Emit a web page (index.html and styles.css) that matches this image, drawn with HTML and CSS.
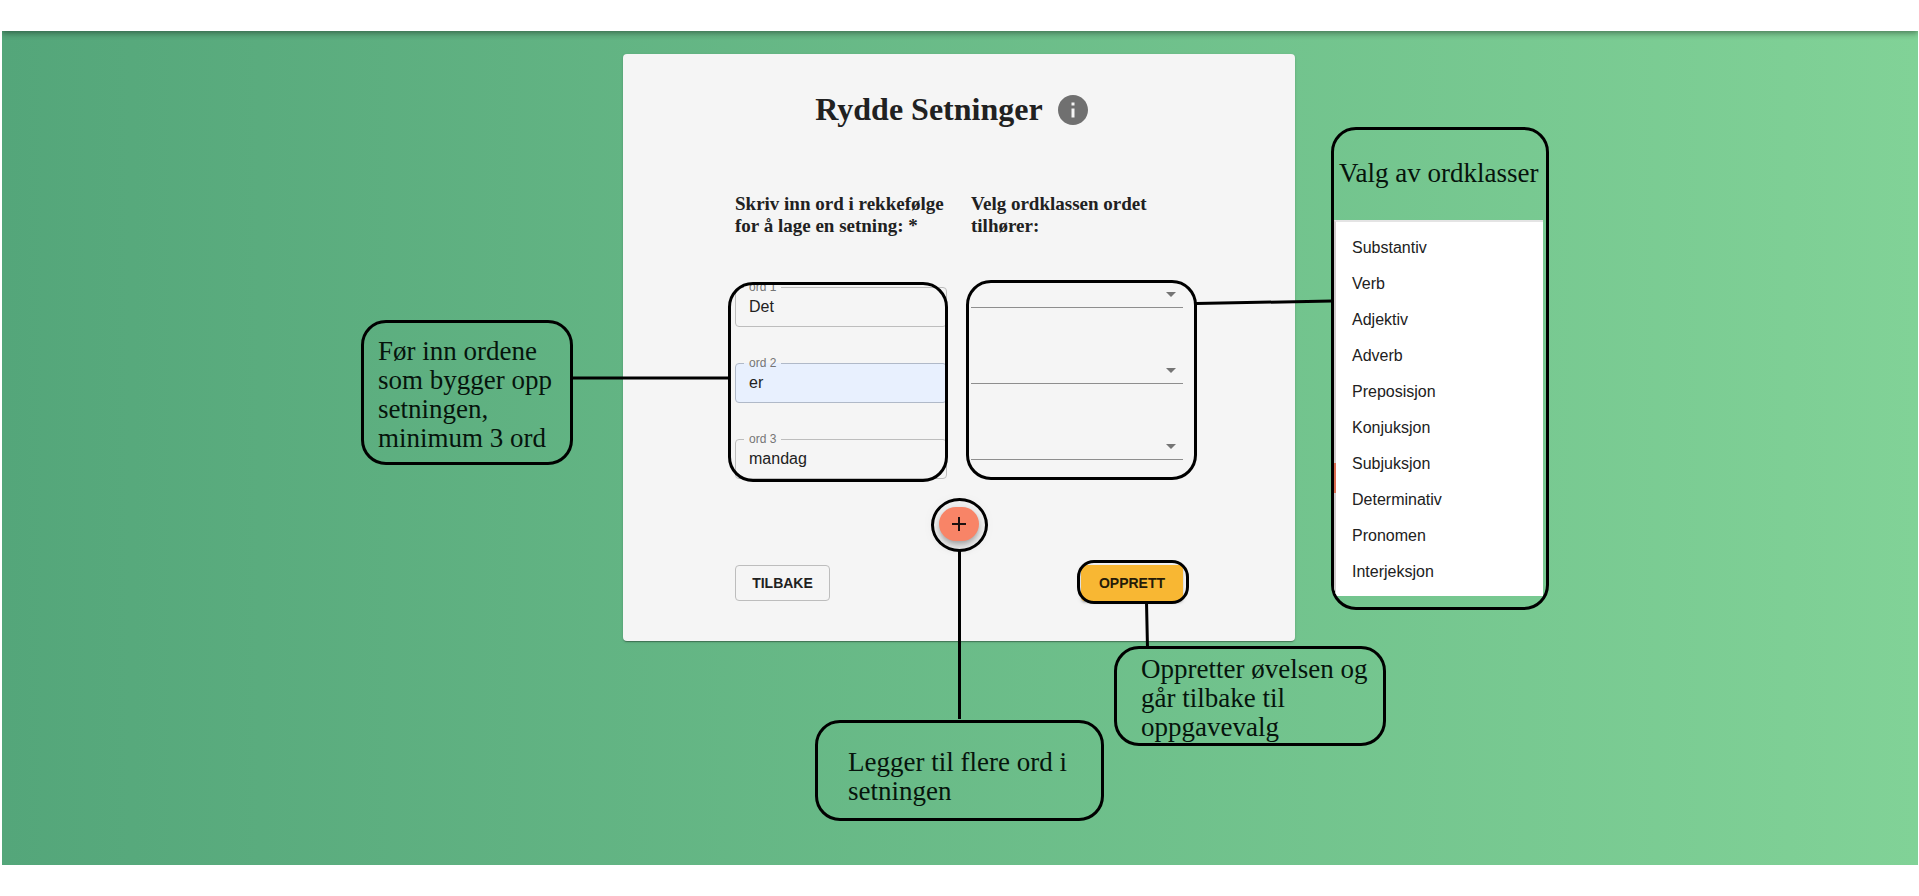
FILE: index.html
```html
<!DOCTYPE html>
<html lang="nb">
<head>
<meta charset="utf-8">
<title>Rydde Setninger</title>
<link rel="stylesheet" href="styles.css">
</head>
<body>
<header class="topbar"></header>
<main class="stage">
  <div class="canvas">
    <form class="card">
      <div class="title-row">
        <h1 class="title">Rydde Setninger</h1>
        <button class="info" type="button" aria-label="Informasjon">
          <svg viewBox="0 0 24 24" width="36" height="36"><path fill="currentColor" d="M12 2C6.48 2 2 6.48 2 12s4.480 10 10 10 10-4.480 10-10S17.520 2 12 2zm1 15h-2v-6h2v6zm0-8h-2V7h2v2z"/></svg>
        </button>
      </div>
      <div class="columns headings">
        <h2 class="heading">Skriv inn ord i rekkefølge for å lage en setning: *</h2>
        <h2 class="heading">Velg ordklassen ordet tilhører:</h2>
      </div>
      <div class="columns words">
        <div class="field">
          <label class="field-label" for="ord1">ord 1</label>
          <input class="field-input" id="ord1" type="text" value="Det">
        </div>
        <div class="choice">
          <select class="choice-select" aria-label="Ordklasse for ord 1"><option></option><option>Substantiv</option><option>Verb</option></select>
        </div>
        <div class="field filled">
          <label class="field-label" for="ord2">ord 2</label>
          <input class="field-input" id="ord2" type="text" value="er">
        </div>
        <div class="choice">
          <select class="choice-select" aria-label="Ordklasse for ord 2"><option></option><option>Substantiv</option><option>Verb</option></select>
        </div>
        <div class="field">
          <label class="field-label" for="ord3">ord 3</label>
          <input class="field-input" id="ord3" type="text" value="mandag">
        </div>
        <div class="choice">
          <select class="choice-select" aria-label="Ordklasse for ord 3"><option></option><option>Substantiv</option><option>Verb</option></select>
        </div>
      </div>
      <button class="fab" type="button" aria-label="Legg til ord">
        <svg viewBox="0 0 24 24" width="24" height="24"><path fill="currentColor" d="M19 13h-6v6h-2v-6H5v-2h6V5h2v6h6v2z"/></svg>
      </button>
      <div class="actions">
        <button class="button outlined" type="button">TILBAKE</button>
        <button class="button contained" type="button">OPPRETT</button>
      </div>
    </form>

    <svg class="connectors" viewBox="0 0 1200 834" width="1200" height="834" aria-hidden="true">
      <path d="M213 347H370M837 272.500L973 270M600.500 520V688M787.500 571L788.500 617"/>
    </svg>
    <div class="callout around-fields"></div>
    <div class="callout around-choices"></div>
    <div class="callout around-fab"></div>
    <div class="callout around-submit"></div>
    <p class="callout note note-words">Før inn ordene<br>som bygger opp<br>setningen,<br>minimum 3 ord</p>
    <p class="callout note note-add">Legger til flere ord i<br>setningen</p>
    <p class="callout note note-submit">Oppretter øvelsen og<br>går tilbake til<br>oppgavevalg</p>
    <section class="callout classes">
      <h2 class="classes-title">Valg av ordklasser</h2>
      <ul class="menu">
        <li>Substantiv</li>
        <li>Verb</li>
        <li>Adjektiv</li>
        <li>Adverb</li>
        <li>Preposisjon</li>
        <li>Konjuksjon</li>
        <li>Subjuksjon</li>
        <li>Determinativ</li>
        <li>Pronomen</li>
        <li>Interjeksjon</li>
      </ul>
    </section>
  </div>
</main>
<footer class="bottombar"></footer>
</body>
</html>
```
FILE: styles.css
```css
* { box-sizing: border-box; }

body {
  --paper: #f5f5f5;
  --ink: #212121;
  display: flex;
  flex-direction: column;
  min-height: 100vh;
  margin: 0;
  background: #fff;
  color: var(--ink);
  font-family: "Liberation Sans", Arial, sans-serif;
}

h1, h2, p, ul { margin: 0; padding: 0; }

.topbar {
  position: relative;
  z-index: 1;
  height: 31px;
  margin: 0 1px 0 2px;
  background: #fff;
  box-shadow: 0 2px 4px -1px rgba(0, 0, 0, .2), 0 4px 5px rgba(0, 0, 0, .14), 0 1px 10px rgba(0, 0, 0, .12);
  clip-path: inset(0 0 -20px 0);
}

.bottombar { height: 31px; }

.stage {
  flex: 1;
  display: flex;
  justify-content: center;
  margin: 0 1px 0 2px;
  padding-right: 2px;
  background: linear-gradient(to right, #54a67a, #81d297);
}

.canvas {
  position: relative;
  display: flex;
  justify-content: center;
  align-items: flex-start;
  width: 1200px;
}

.card {
  display: flex;
  flex-direction: column;
  width: 672px;
  margin-top: 23px;
  padding: 26px 112px 40px;
  border-radius: 4px;
  background: var(--paper);
  box-shadow: 0 2px 1px -1px rgba(0, 0, 0, .2), 0 1px 1px rgba(0, 0, 0, .14), 0 1px 3px rgba(0, 0, 0, .12);
}

.title-row {
  display: flex;
  justify-content: center;
  align-items: center;
}

.title {
  padding-bottom: 2px;
  font: bold 32px/36px "Liberation Serif", "Times New Roman", serif;
}

.info {
  display: flex;
  padding: 12px;
  border: 0;
  background: none;
  color: #707070;
}

.columns {
  display: grid;
  grid-template-columns: 1fr 1fr;
  column-gap: 24px;
}

.headings { margin-top: 53px; }

.heading { font: bold 19px/22px "Liberation Serif", "Times New Roman", serif; }

.words {
  row-gap: 36px;
  align-items: start;
  margin-top: 50px;
}

.field {
  --fill: var(--paper);
  position: relative;
  height: 40px;
  border: 1px solid #bdbdbd;
  border-radius: 4px;
  background: var(--fill);
}

.filled { --fill: #e8f0fe; border-color: #b0b9c8; }

.field-label {
  position: absolute;
  top: -8px;
  left: 8px;
  padding: 0 5px;
  background: linear-gradient(var(--paper) 50%, var(--fill) 50%);
  color: #757575;
  font-size: 12px;
  line-height: 14px;
}

.field-input {
  display: block;
  width: 100%;
  height: 37px;
  padding: 0 13px;
  border: 0;
  background: none;
  color: var(--ink);
  font: 16px/20px "Liberation Sans", Arial, sans-serif;
}

.choice { position: relative; }

.choice::after {
  content: "";
  position: absolute;
  top: 5px;
  right: 7px;
  border: 5px solid transparent;
  border-top-color: #757575;
  border-bottom: 0;
}

.choice-select {
  display: block;
  width: 100%;
  height: 21px;
  border: 0;
  border-bottom: 1px solid #8e8e8e;
  border-radius: 0;
  background: none;
  appearance: none;
  font: 16px/20px "Liberation Sans", Arial, sans-serif;
}

.fab {
  display: flex;
  justify-content: center;
  align-items: center;
  align-self: center;
  width: 40px;
  height: 34px;
  margin-top: 28px;
  padding: 0;
  border: 0;
  border-radius: 24px;
  background: #f88467;
  color: #1c1010;
  box-shadow: 0 3px 5px -1px rgba(0, 0, 0, .2), 0 6px 10px rgba(0, 0, 0, .14), 0 1px 18px rgba(0, 0, 0, .12);
}

.actions {
  display: flex;
  justify-content: space-between;
  margin-top: 24px;
}

.button {
  height: 36px;
  padding: 0 16px;
  border: 0;
  border-radius: 4px;
  color: var(--ink);
  font: bold 14px/24px "Liberation Sans", Arial, sans-serif;
}

.outlined {
  min-width: 95px;
  border: 1px solid #bdbdbd;
  background: none;
}

.contained {
  min-width: 102px;
  background: #f8b733;
  color: #251b08;
  box-shadow: 0 3px 1px -2px rgba(0, 0, 0, .2), 0 2px 2px rgba(0, 0, 0, .14), 0 1px 5px rgba(0, 0, 0, .12);
}

.connectors {
  position: absolute;
  top: 0;
  left: 0;
  fill: none;
  stroke: #000;
  stroke-width: 3;
}

.callout {
  position: absolute;
  border: 3px solid #000;
  border-radius: 25px;
}

.around-fields { top: 251px; left: 369px; width: 220px; height: 200px; }
.around-choices { top: 249px; left: 607px; width: 231px; height: 200px; }
.around-fab { top: 467px; left: 572px; width: 57px; height: 54px; border-radius: 50%; }
.around-submit { top: 529px; left: 718px; width: 112px; height: 44px; border-radius: 17px; }

.note, .classes-title {
  color: #06140c;
  font: 27px/29px "Liberation Serif", "Times New Roman", serif;
  white-space: nowrap;
}

.note-words { top: 289px; left: 2px; width: 212px; height: 145px; padding: 14px 14px; }
.note-add { top: 689px; left: 456px; width: 289px; height: 101px; padding: 25px 30px; }
.note-submit { top: 615px; left: 755px; width: 272px; height: 100px; padding: 6px 24px; }

.classes {
  top: 96px;
  left: 972px;
  width: 218px;
  height: 483px;
  overflow: hidden;
}

.classes-title { padding: 29px 5px 32px; }

.menu {
  position: relative;
  margin-right: 3px;
  padding: 8px 16px 6px;
  border-top: 2px solid #e4e4e4;
  border-left: 2px solid #d0cccc;
  background: #fff;
  list-style: none;
  font-size: 16px;
  line-height: 36px;
}

.menu::before {
  content: "";
  position: absolute;
  top: 241px;
  left: -2px;
  width: 2px;
  height: 30px;
  background: #d96f53;
}
```
